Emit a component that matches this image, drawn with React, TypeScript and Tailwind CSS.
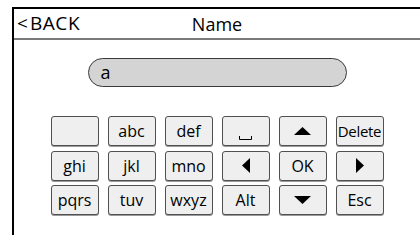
import type { ReactNode } from "react";

const font = { fontFamily: '"Open Sans", "Noto Sans", sans-serif' };

function Key({ children, small }: { children?: ReactNode; small?: boolean }) {
  return (
    <div
      className={`flex h-[30px] items-center justify-center rounded-[3px] border border-[#505050] bg-[#efefef] text-black shadow-[0_1px_0_#9a9a9a] ${
        small ? "text-[15px] tracking-[-0.3px]" : "text-[16px]"
      }`}
    >
      {children}
    </div>
  );
}

function Triangle({ dir }: { dir: "up" | "down" | "left" | "right" }) {
  if (dir === "up" || dir === "down") {
    return (
      <svg width="17" height="8" viewBox="0 0 17 8">
        <polygon points={dir === "up" ? "8.5,0 17,8 0,8" : "0,0 17,0 8.5,8"} fill="#000" />
      </svg>
    );
  }
  return (
    <svg width="8" height="15" viewBox="0 0 8 15">
      <polygon points={dir === "left" ? "8,0 8,15 0,7.5" : "0,0 8,7.5 0,15"} fill="#000" />
    </svg>
  );
}

function SpaceGlyph() {
  return (
    <svg width="13" height="4" viewBox="0 0 13 4" className="mt-[13px]">
      <polyline points="0.5,0 0.5,3.5 12.5,3.5 12.5,0" fill="none" stroke="#000" strokeWidth="1" />
    </svg>
  );
}

export default function App() {
  return (
    <div className="h-[235px] w-[420px] overflow-hidden bg-white" style={font}>
      <div className="ml-[12px] mt-[7px] h-[228px] border-l-2 border-t-2 border-black">
        <div className="relative flex h-[31px] items-center border-b-2 border-[#7a7a7a]">
          <span className="flex items-center gap-[2px] pl-[3px] text-[19px] leading-none text-black">
            <span>&lt;</span>
            <span className="tracking-[0.6px]">BACK</span>
          </span>
          <span className="absolute left-1/2 -translate-x-1/2 text-[18px] leading-none text-black">Name</span>
        </div>

        <div className="mx-auto mt-[18px] flex h-[29px] w-[259px] items-center rounded-full border border-[#3a3a3a] bg-[#d4d4d4] pl-[12px] text-[18px] text-black">
          a
        </div>

        <div className="mx-auto mt-[29px] grid w-[333px] grid-cols-6 gap-x-[9px] gap-y-[4.5px]">
          <Key />
          <Key>abc</Key>
          <Key>def</Key>
          <Key>
            <SpaceGlyph />
          </Key>
          <Key>
            <Triangle dir="up" />
          </Key>
          <Key small>Delete</Key>

          <Key>ghi</Key>
          <Key>jkl</Key>
          <Key>mno</Key>
          <Key>
            <Triangle dir="left" />
          </Key>
          <Key>OK</Key>
          <Key>
            <Triangle dir="right" />
          </Key>

          <Key>pqrs</Key>
          <Key>tuv</Key>
          <Key>wxyz</Key>
          <Key>Alt</Key>
          <Key>
            <Triangle dir="down" />
          </Key>
          <Key>Esc</Key>
        </div>
      </div>
    </div>
  );
}
